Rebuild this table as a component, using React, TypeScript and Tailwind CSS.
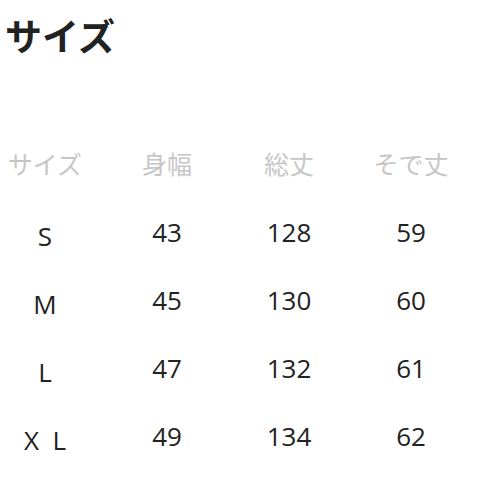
export default function App() {
  const rows = [
    ["S", "43", "128", "59"],
    ["M", "45", "130", "60"],
    ["L", "47", "132", "61"],
    ["X  L", "49", "134", "62"],
  ];
  return (
    <div className="w-[486px] h-[486px] bg-white overflow-hidden font-['Open_Sans','Noto_Sans_CJK_JP',sans-serif]">
      <div className="pt-[13px] pl-[5px] h-[58px] text-[37px] leading-[44px] font-bold text-[#222] font-['Noto_Sans_CJK_JP',sans-serif]">
        サイズ
      </div>
      <div className="mt-[72px] grid grid-cols-[90px_90px_90px_90px] gap-x-[32px]">
        {["サイズ", "身幅", "総丈", "そで丈"].map((h) => (
          <div
            key={h}
            className="h-[68px] flex items-center justify-center text-[25px] text-[#c6c6c6] font-['Noto_Sans_CJK_JP',sans-serif]"
          >
            {h}
          </div>
        ))}
        {rows.map((r) =>
          r.map((c, i) => (
            <div
              key={r[0] + i}
              className={
                i === 0
                  ? "h-[68px] flex items-center justify-center text-[26px] text-[#222] whitespace-pre pt-[8px]"
                  : "h-[68px] flex items-center justify-center text-[26px] text-[#222] whitespace-pre"
              }
            >
              {c}
            </div>
          ))
        )}
      </div>
    </div>
  );
}
